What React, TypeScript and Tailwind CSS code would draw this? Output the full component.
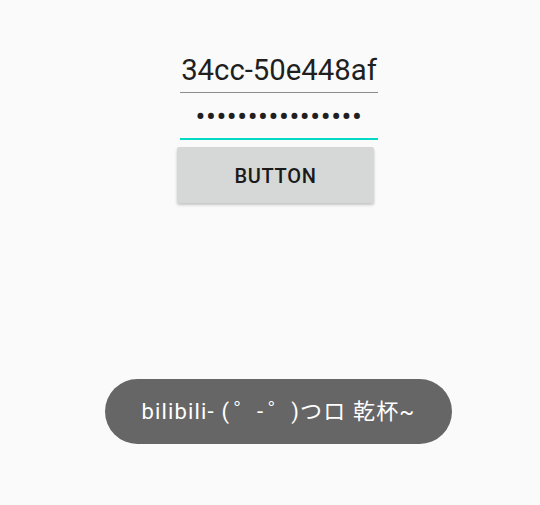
export default function App() {
  return (
    <div className="w-[540px] h-[505px] bg-[#fafafa] flex flex-col overflow-hidden" style={{ fontFamily: 'Roboto, "Noto Sans CJK JP", sans-serif' }}>
      <div className="ml-[180px] w-[198px] flex flex-col mt-[52px]">
        <div className="h-[36px] leading-[36px] text-[29.3px] text-[#1f1f1f] text-center whitespace-nowrap overflow-hidden">34cc-50e448af</div>
        <div className="mt-[4px] h-px bg-[#8c8c8c]" />
        <div className="mt-[6px] h-[36px] leading-[36px] text-[29.3px] tracking-[0.55px] text-[#1f1f1f] text-center whitespace-nowrap overflow-hidden">••••••••••••••••</div>
        <div className="mt-[3px] h-[2px] bg-[#03dac5]" />
        <div className="mt-[7px] -ml-[3px] w-[197px] h-[56px] pt-[2px] rounded-[2px] bg-[#d6d7d7] shadow-[0_2px_3px_rgba(0,0,0,0.22)] flex items-center justify-center text-[20px] font-medium tracking-[0.7px] text-[#1a1a1a]">
          BUTTON
        </div>
      </div>
      <div className="ml-[105px] mt-[176px] w-[347px] h-[65px] rounded-full bg-[#666666] flex items-center justify-center text-white text-[22px] tracking-[1.15px] whitespace-nowrap">
        <span>bilibili- (</span>
        <span className="inline-block w-[27px] pl-[4px]">゜</span>
        <span>-</span>
        <span className="inline-block w-[27px] pl-[4px]">゜</span>
        <span>)つロ 乾杯~</span>
      </div>
    </div>
  );
}
